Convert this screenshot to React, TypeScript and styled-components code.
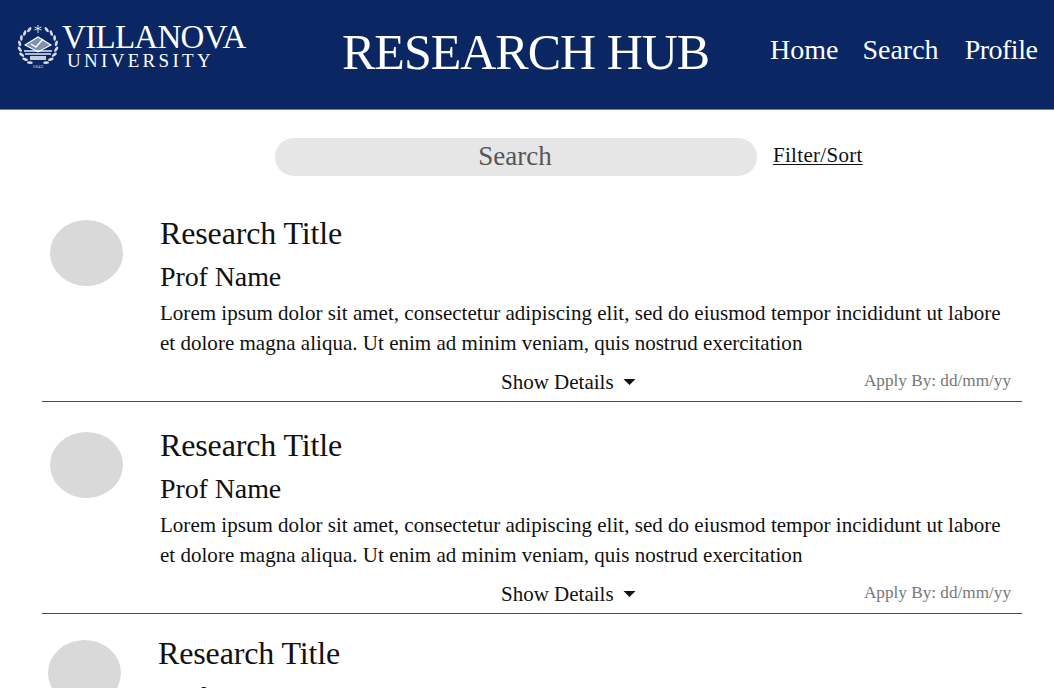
import React from "react";
import styled, { createGlobalStyle } from "styled-components";

const Global = createGlobalStyle`
  html, body { margin: 0; padding: 0; background: #fff; overflow: hidden; }
  body { font-family: "Liberation Serif", serif; color: #111; width: 1054px; height: 688px; }
`;

const Page = styled.div`
  width: 1054px;
  height: 688px;
  overflow: hidden;
`;

const Header = styled.header`
  height: 110px;
  box-sizing: border-box;
  background: #0a2663;
  border-bottom: 1px solid #6f83ab;
  display: flex;
  align-items: flex-start;
  color: #fff;
`;

const Logo = styled.div`
  display: flex;
  align-items: flex-start;
  gap: 2px;
  margin: 24px 0 0 16px;
  width: 232px;
`;

const Wordmark = styled.div`
  display: flex;
  flex-direction: column;
  margin-top: -1px;
`;

const WordTop = styled.span`
  font-size: 33px;
  line-height: 28px;
  letter-spacing: -0.7px;
  white-space: nowrap;
`;

const WordBottom = styled.span`
  font-size: 19px;
  line-height: 20px;
  letter-spacing: 3.3px;
  margin-left: 5px;
  white-space: nowrap;
`;

const SealYear = styled.text`
  font-size: 5px;
  fill: #dfe4ee;
  text-anchor: middle;
  letter-spacing: 0.3px;
`;

const HubTitle = styled.h1`
  margin: 24px 0 0 94px;
  font-size: 50px;
  line-height: 56px;
  font-weight: 400;
  white-space: nowrap;
  width: 368px;
  letter-spacing: -1px;
`;

const Nav = styled.nav`
  display: flex;
  margin: 34px 0 0 60px;
  gap: 24px;
`;

const NavLink = styled.a<{ $tight?: boolean }>`
  font-size: 28px;
  line-height: 32px;
  color: #fff;
  white-space: nowrap;
  margin-left: ${(p) => (p.$tight ? "2px" : "0")};
  letter-spacing: ${(p) => (p.$tight ? "-0.5px" : "0")};
`;

const SearchRow = styled.div`
  display: flex;
  align-items: center;
  margin: 28px 0 0 275px;
  height: 38px;
  gap: 16px;
`;

const SearchBox = styled.div`
  width: 482px;
  height: 38px;
  border-radius: 19px;
  background: #e6e6e6;
  color: #555;
  font-size: 27px;
  line-height: 36px;
  text-align: center;
  padding-right: 2px;
  box-sizing: border-box;
`;

const FilterLink = styled.a`
  font-size: 21px;
  line-height: 32px;
  margin-top: -4px;
  color: #111;
  letter-spacing: 0.3px;
  text-decoration: underline;
  text-decoration-thickness: 1px;
  text-underline-offset: 2px;
  white-space: nowrap;
`;

const List = styled.div`
  margin: 14px 32px 0 42px;
  display: flex;
  flex-direction: column;
`;

const Item = styled.article<{ $last?: boolean }>`
  display: flex;
  height: ${(p) => (p.$last ? "auto" : "212px")};
  box-sizing: border-box;
  border-bottom: ${(p) => (p.$last ? "none" : "1px solid #4d4d4d")};
  margin-left: ${(p) => (p.$last ? "-2px" : "0")};
  padding-top: ${(p) => (p.$last ? "0" : "4px")};
`;

const Avatar = styled.div`
  width: 73px;
  height: 66px;
  border-radius: 50%;
  background: #d9d9d9;
  margin: 26px 37px 0 8px;
  flex: none;
`;

const Body = styled.div`
  flex: 1;
  min-width: 0;
  padding-right: 11px;
`;

const Title = styled.h2`
  margin: 20px 0 0;
  font-size: 32px;
  line-height: 38px;
  font-weight: 400;
  white-space: nowrap;
  letter-spacing: -0.14px;
`;

const Prof = styled.h3`
  margin: 9px 0 0;
  font-size: 28px;
  line-height: 32px;
  font-weight: 400;
  white-space: nowrap;
  letter-spacing: -0.1px;
`;

const Desc = styled.p`
  margin: 5px 0 0;
  font-size: 21px;
  line-height: 30px;
  white-space: nowrap;
  letter-spacing: 0.02px;
`;

const Footer = styled.div`
  display: flex;
  align-items: center;
  margin-top: 9px;
  height: 30px;
`;

const Toggle = styled.button`
  margin-left: 341px;
  padding: 0;
  border: 0;
  background: none;
  font: inherit;
  font-size: 21px;
  color: #111;
  display: flex;
  align-items: center;
  gap: 9px;
  white-space: nowrap;
`;

const Caret = styled.svg`
  width: 13px;
  height: 6px;
  fill: #111;
`;

const ApplyBy = styled.span`
  margin-left: auto;
  font-size: 17.2px;
  color: #777;
  white-space: nowrap;
  margin-top: -2px;
`;

function Seal() {
  const angles = [-62, -44, -26, -8, 10, 28, 46, 64];
  const leaf = (x: number, y: number, rot: number, key: string) => (
    <ellipse key={key} cx={x} cy={y} rx="3" ry="1.4" fill="#d5dbe8" stroke="none" transform={`rotate(${rot} ${x} ${y})`} />
  );
  return (
    <svg width="44" height="45" viewBox="0 0 44 45" fill="none" stroke="#fff">
      {angles.map((deg) => {
        const a = (deg * Math.PI) / 180;
        const dx = Math.cos(a) * 18.5;
        const dy = Math.sin(a) * 18.5;
        return (
          <React.Fragment key={deg}>
            {leaf(22 + dx, 22 + dy, deg + 115, `r${deg}`)}
            {leaf(22 - dx, 22 + dy, -deg - 115, `l${deg}`)}
          </React.Fragment>
        );
      })}
      <path d="M22 1v8M18.5 3l7 3M25.5 3l-7 3" strokeWidth="1" opacity=".85" />
      <path d="M9 21l13-8 13 8-13 7z" fill="#7f90b4" strokeWidth="1.1" />
      <path d="M15 20l5 3 7-8" strokeWidth="1.4" />
      <path d="M8 27h28M9 30h26" strokeWidth="1.3" opacity=".9" />
      <path d="M14 32h16v4H14z" fill="#c5cede" stroke="none" />
      <SealYear x="22" y="44" stroke="none">1842</SealYear>
    </svg>
  );
}

const rows = [0, 1, 2];

export default function App() {
  return (
    <Page>
      <Global />
      <Header>
        <Logo>
          <Seal />
          <Wordmark>
            <WordTop>VILLANOVA</WordTop>
            <WordBottom>UNIVERSITY</WordBottom>
          </Wordmark>
        </Logo>
        <HubTitle>RESEARCH HUB</HubTitle>
        <Nav>
          <NavLink>Home</NavLink>
          <NavLink>Search</NavLink>
          <NavLink $tight>Profile</NavLink>
        </Nav>
      </Header>
      <SearchRow>
        <SearchBox>Search</SearchBox>
        <FilterLink>Filter/Sort</FilterLink>
      </SearchRow>
      <List>
        {rows.map((r) => (
          <Item key={r} $last={r === 2}>
            <Avatar />
            <Body>
              <Title>Research Title</Title>
              <Prof>Prof Name</Prof>
              <Desc>
                Lorem ipsum dolor sit amet, consectetur adipiscing elit, sed do eiusmod tempor incididunt ut labore
                <br />
                et dolore magna aliqua. Ut enim ad minim veniam, quis nostrud exercitation
              </Desc>
              <Footer>
                <Toggle>
                  Show Details
                  <Caret viewBox="0 0 14 7">
                    <path d="M0 0h14L7 7z" />
                  </Caret>
                </Toggle>
                <ApplyBy>Apply By: dd/mm/yy</ApplyBy>
              </Footer>
            </Body>
          </Item>
        ))}
      </List>
    </Page>
  );
}
